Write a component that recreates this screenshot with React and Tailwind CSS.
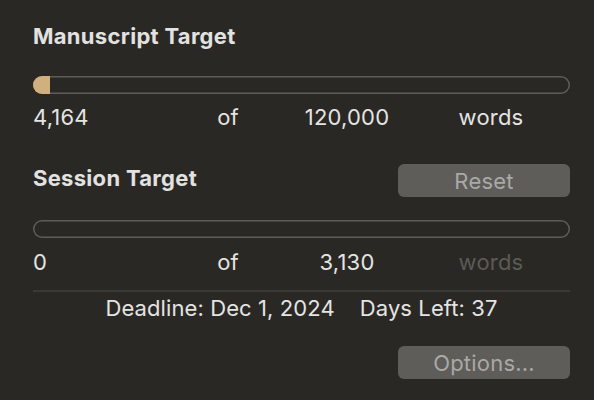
import React from "react";

const ProgressBar = ({ fill }) => (
  <div className="h-[18px] w-full rounded-full overflow-hidden ring-[1.5px] ring-inset ring-[#5e5c58]">
    <div className="h-full bg-[#cfb07e]" style={{ width: fill }}></div>
  </div>
);

const CountRow = ({ current, target, dimWords }) => (
  <div className="flex h-[28px] items-center text-[22px] leading-[28px] tracking-[0.2px] text-[#e4e4e2]">
    <div className="w-[150px]">{current}</div>
    <div className="w-[90px] text-center">of</div>
    <div className="w-[148px] text-center">{target}</div>
    <div className={`w-[140px] text-center ${dimWords ? "text-[#5b5a56]" : ""}`}>words</div>
  </div>
);

const MacButton = ({ children, className }) => (
  <button
    className={`w-[172px] h-[33px] rounded-[6px] bg-[#5e5d59] text-[22px] tracking-[0.2px] text-[#a9a9a6] leading-none ${className || ""}`}
  >
    {children}
  </button>
);

export default function App() {
  return (
    <div
      className="w-[594px] h-[400px] bg-[#2a2825] pl-[33px] pr-[24px] pt-[22px] flex flex-col"
      style={{ fontFamily: "Inter, 'Noto Sans', sans-serif" }}
    >
      <div className="h-[28px] text-[22px] leading-[28px] font-bold tracking-[0.3px] text-[#e2e2e0]">
        Manuscript Target
      </div>

      <div className="mt-[26px]">
        <ProgressBar fill="17px" />
      </div>

      <div className="mt-[9px]">
        <CountRow current="4,164" target="120,000" />
      </div>

      <div className="mt-[33px] flex h-[33px] items-center justify-between">
        <div className="mb-[5px] text-[22px] leading-[28px] font-bold tracking-[0.3px] text-[#e2e2e0]">
          Session Target
        </div>
        <MacButton>Reset</MacButton>
      </div>

      <div className="mt-[23px]">
        <ProgressBar fill="0px" />
      </div>

      <div className="mt-[10px]">
        <CountRow current="0" target="3,130" dimWords />
      </div>

      <div className="mt-[14px] h-[2px] bg-[#3b3936]"></div>

      <div className="mt-[2px] flex h-[28px] items-center justify-center gap-[25px] text-[22px] leading-[28px] tracking-[0.1px] text-[#e4e4e2]">
        <span>Deadline: Dec 1, 2024</span>
        <span>Days Left: 37</span>
      </div>

      <MacButton className="mt-[24px] self-end">Options...</MacButton>
    </div>
  );
}
